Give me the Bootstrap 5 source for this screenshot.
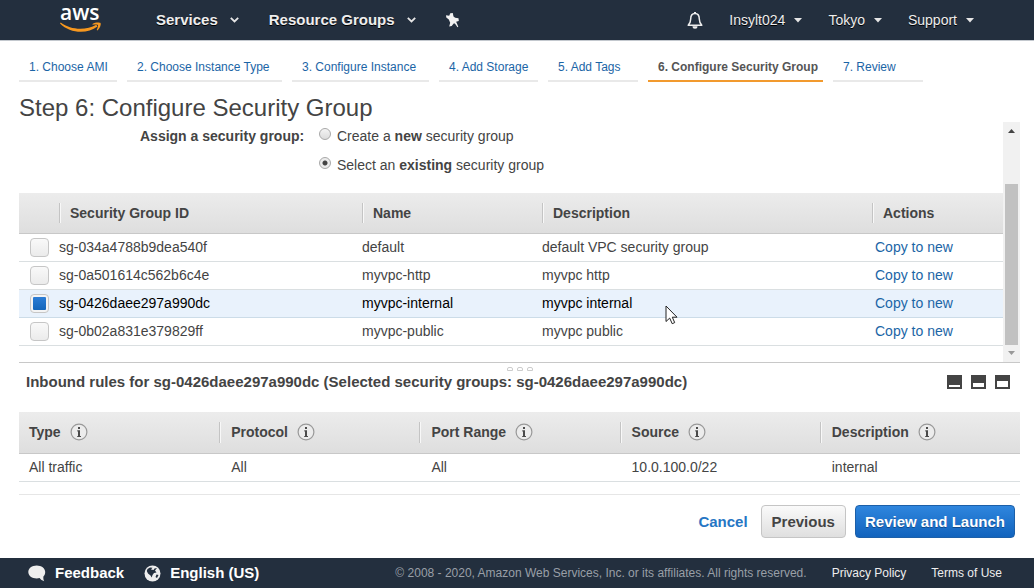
<!DOCTYPE html>
<html lang="en">
<head>
<meta charset="utf-8">
<meta name="viewport" content="width=device-width, initial-scale=1">
<title>Configure Security Group</title>
<link href="https://cdn.jsdelivr.net/npm/bootstrap@5.3.0/dist/css/bootstrap.min.css" rel="stylesheet">
<style>
  body { font: 14px/20px "Liberation Sans", Arial, sans-serif; color: #444; background: #fff; }
  a { text-decoration: none; color: #1b65a6; }
  button { font-family: inherit; }
  svg { display: block; flex: none; overflow: visible; }

  .console-bar { background: #232f3e; height: 41px; padding: 0 60px 0 58px; border-bottom: 1px solid #c3c8ce; }
  .console-bar button { border: 0; background: none; padding: 0; color: #eee; text-shadow: 0 1px 0 #000; line-height: 20px; }
  .menu-main { font-size: 15px; font-weight: 700; gap: 12px; }
  .menu-side { font-size: 14px; gap: 9px; }
  .main-group { gap: 30px; margin-left: 53px; }
  .side-group { gap: 26px; }

  .wizard { padding: 9px 14px 0 19px; }
  .steps { display: grid; grid-template-columns: 98px 155px 137px 99px 90px 175px 90px; column-gap: 10px; font-size: 12px; white-space: nowrap; }
  .steps a { display: block; padding: 7px 0 4px 10px; height: 32px; border-bottom: 2px solid #e9e9e9; }
  .steps a.current { color: #555; font-weight: 700; border-color: #f29a2e; }
  .wizard h1 { font-size: 24px; line-height: 30px; margin: 11px 0 -1px; font-weight: 400; color: #444; }

  .pane { border-bottom: 1px solid #c8c8c8; }
  .assign { padding: 4px 0 18px 121px; column-gap: 10px; }
  .assign-label { font-weight: 700; width: 169px; white-space: nowrap; }
  .choices { gap: 9px; }
  .choice { gap: 6px; }
  .choice input { appearance: none; width: 12px; height: 12px; margin: 2px 0 6px; border: 1px solid #a8a8a8; border-radius: 50%; background: linear-gradient(#f4f4f4, #dcdcdc); }
  .choice input:checked { background: radial-gradient(circle, #444 0 2px, #ececec 3px); }

  .grid-table { width: 100%; table-layout: fixed; border-collapse: separate; border-spacing: 0; }
  .grid-table th { height: 41px; padding: 0 0 0 11px; background: linear-gradient(#ececec, #dedede); border-bottom: 1px solid #c8c8c8; font-weight: 700; white-space: nowrap; position: relative; }
  .grid-table th + th::before { content: ""; position: absolute; left: 0; top: 10px; bottom: 10px; width: 2px; background: linear-gradient(90deg, #c4c4c4 50%, #f8f8f8 50%); }
  .grid-table td { height: 28px; padding: 0 0 2px; border-bottom: 1px solid #dadfe1; white-space: nowrap; }
  .grid-table td:has(.pick) { padding-bottom: 0; }
  .grid-table tr.chosen td { background: #e9f2fc; color: #000; border-color: #ccdce8; }
  .grid-table td.act { padding-left: 3px; }
  .c-pick { width: 40px; } .c-id { width: 303px; } .c-name { width: 180px; } .c-act { width: 131px; }
  .pick { appearance: none; display: block; width: 19px; height: 19px; margin: 0 0 0 11px; border: 1px solid #c6c6c6; border-radius: 4px; background: linear-gradient(#f9f9f9, #ebebeb); padding: 2px; }
  .pick:checked { background: linear-gradient(#2c7dd6, #1566ba) content-box, #f4f4f4; }

  .scroller { width: 17px; background: #f1f1f1; }
  .scroller .grip-bar { width: 13px; height: 161px; background: #c1c1c1; margin: 0 auto; }

  .grips { height: 9px; gap: 4px; padding-top: 4px; }
  .grips i { width: 6px; height: 4px; border: 1px solid #ccc; border-radius: 2px 2px 0 0; }
  .rules-title { padding: 0 10px 0 7px; margin-bottom: 20px; }
  .rules-title h2 { font-size: 15px; line-height: 20px; font-weight: 700; margin: 0; }
  .rules-title button { border: 0; padding: 0; background: none; }
  .size-buttons, .head-info { gap: 9px; }
  .rules th { height: 42px; padding: 0 0 1px 12px; }
  .rules td { padding-left: 12px; }
  .rules th:first-child, .rules td:first-child { padding-left: 10px; }
  .actions { margin-top: 12px; border-top: 1px solid #e6e6e6; padding: 10px 5px 20px; }
  .actions .btn { font-size: 15px; line-height: 20px; font-weight: 700; height: 33px; padding: 5px 10px; border-radius: 4px; }
  .actions .btn-link { color: #2676c4; text-decoration: none; padding: 5px 12px; }
  .actions .btn-plain { color: #444; border: 1px solid #c5c5c5; background: linear-gradient(#fafafa, #dfdfdf); margin-right: 9px; }
  .actions .btn-go { color: #fff; border: 1px solid #1c5fa8; background: linear-gradient(#2f86de, #1163bd); text-shadow: 0 1px 0 #104a8c; padding: 5px 9px; }

  .foot { background: #232f3e; min-height: 30px; padding: 0 32px 0 28px; font-size: 12px; color: #999fa7; white-space: nowrap; }
  .foot a { color: #eee; }
  .foot-left { gap: 20px; }
  .foot-right { gap: 25px; }
  .foot .strong-link { font-size: 15px; font-weight: 700; color: #fff; gap: 9px; }
  .pointer { position: absolute; left: 123px; top: 15px; z-index: 2; }
</style>
</head>
<body class="d-flex flex-column min-vh-100">

<svg width="0" height="0" class="position-absolute" aria-hidden="true">
  <symbol id="info" viewBox="0 0 18 18"><circle cx="9" cy="9" r="7.900" fill="#ececec" stroke="#999" stroke-width="1.200"/><path d="M8 4h2v2H8zM7.300 7.300H10V13h1v1H7.200v-1H8V8.400h-.7z" fill="#4a4a4a"/></symbol>
  <symbol id="chev" viewBox="0 0 9 6"><path d="M.8.9 4.500 4.500 8.200.9" fill="none" stroke="#e6e6e6" stroke-width="1.800"/></symbol>
  <symbol id="tri" viewBox="0 0 8 5"><path d="M0 0h8L4 4.600z" fill="#e6e6e6"/></symbol>
</svg>

<nav class="console-bar d-flex align-items-center" aria-label="Console">
  <a href="#" aria-label="AWS home">
    <svg width="45" height="40" viewBox="0 -5 45 40">
      <text x="2" y="15" font-family="Open Sans, sans-serif" font-size="21" font-weight="600" fill="#fff">aws</text>
      <path d="M2 18.500C12 28.500 29 29.500 39.500 21.500l-1.200-1.700C28.500 25.500 13 25.500 2.700 17.600z" fill="#f7981f"/>
      <path d="M34.500 18.900c2.500-1.500 7-1.700 8-.8.8 1.200-.5 5.500-3 7.300l-.8-.5c1-2 1.700-4.300 1.200-4.900-.7-.6-3.200-.5-5.300-.2z" fill="#f7981f"/>
    </svg>
  </a>
  <div class="main-group d-flex align-items-center">
    <button class="menu-main d-flex align-items-center">Services <svg width="9" height="6"><use href="#chev"/></svg></button>
    <button class="menu-main d-flex align-items-center">Resource Groups <svg width="9" height="6"><use href="#chev"/></svg></button>
    <button aria-label="Pin shortcuts"><svg width="13" height="15" viewBox="0 0 13 15"><path d="M4.300.3 6.800 0l.7 3.500 1.700 1.200 3.300.6.300 2.700-2.700.700.600 1.200 1.600 3.900-.8.400-2.600-3.700-1.200-.1-2 2.700-2.500.300 1-3.700-1.400-3.200L.3 4.500 0 2.300l3.200.4z" fill="#f2f2f2"/></svg></button>
  </div>
  <div class="side-group d-flex align-items-center ms-auto">
    <button aria-label="Notifications"><svg width="16" height="17" viewBox="0 0 16 17"><path d="M8 1.500C4.500 1.500 3.700 4 3.700 7c0 3-.7 4.300-2.500 6.200h13.600C13 11.300 12.300 10 12.300 7c0-3-.8-5.500-4.300-5.500z" fill="none" stroke="#eee" stroke-width="1.500" stroke-linejoin="round"/><path d="M7 0h2v2H7zM5.500 14.200h5a2.500 2.500 0 0 1-5 0z" fill="#eee"/></svg></button>
    <button class="menu-side d-flex align-items-center">Insylt024 <svg width="8" height="5"><use href="#tri"/></svg></button>
    <button class="menu-side d-flex align-items-center">Tokyo <svg width="8" height="5"><use href="#tri"/></svg></button>
    <button class="menu-side d-flex align-items-center">Support <svg width="8" height="5"><use href="#tri"/></svg></button>
  </div>
</nav>

<main class="wizard flex-grow-1">
  <nav class="steps" aria-label="Steps">
    <a href="#">1. Choose AMI</a>
    <a href="#">2. Choose Instance Type</a>
    <a href="#">3. Configure Instance</a>
    <a href="#">4. Add Storage</a>
    <a href="#">5. Add Tags</a>
    <a href="#" class="current" aria-current="step">6. Configure Security Group</a>
    <a href="#">7. Review</a>
  </nav>
  <h1>Step 6: Configure Security Group</h1>

  <section class="pane d-flex">
    <div class="flex-grow-1">
      <div class="assign d-flex" role="radiogroup" aria-labelledby="assign">
        <div class="assign-label" id="assign">Assign a security group:</div>
        <div class="choices d-flex flex-column">
          <div class="choice d-flex"><input type="radio" name="sg" id="sg-new"><label for="sg-new">Create a <b>new</b> security group</label></div>
          <div class="choice d-flex"><input type="radio" name="sg" id="sg-old" checked><label for="sg-old">Select an <b>existing</b> security group</label></div>
        </div>
      </div>
      <table class="grid-table">
        <colgroup><col class="c-pick"><col class="c-id"><col class="c-name"><col><col class="c-act"></colgroup>
        <thead><tr><th></th><th>Security Group ID</th><th>Name</th><th>Description</th><th>Actions</th></tr></thead>
        <tbody>
          <tr><td><input class="pick" type="checkbox" id="g1"></td><td><label for="g1">sg-034a4788b9dea540f</label></td><td>default</td><td>default VPC security group</td><td class="act"><a href="#">Copy to new</a></td></tr>
          <tr><td><input class="pick" type="checkbox" id="g2"></td><td><label for="g2">sg-0a501614c562b6c4e</label></td><td>myvpc-http</td><td>myvpc http</td><td class="act"><a href="#">Copy to new</a></td></tr>
          <tr class="chosen"><td><input class="pick" type="checkbox" id="g3" checked></td><td><label for="g3">sg-0426daee297a990dc</label></td><td>myvpc-internal</td><td class="position-relative">myvpc internal
            <svg class="pointer" width="13" height="20" viewBox="0 0 13 20"><path d="M1 1v15.500l3.700-3.400 2.500 5.600 2.500-1.100-2.400-5.400H12z" fill="#fff" stroke="#222" stroke-width="1"/></svg></td><td class="act"><a href="#">Copy to new</a></td></tr>
          <tr><td><input class="pick" type="checkbox" id="g4"></td><td><label for="g4">sg-0b02a831e379829ff</label></td><td>myvpc-public</td><td>myvpc public</td><td class="act"><a href="#">Copy to new</a></td></tr>
        </tbody>
      </table>
      <div class="pt-3"></div>
    </div>
    <div class="scroller flex-shrink-0 d-flex flex-column align-items-center" aria-hidden="true">
      <svg width="7" height="18" viewBox="0 0 7 18"><path d="M0 11h7L3.500 7z" fill="#444"/></svg>
      <div class="grip-bar mt-auto"></div>
      <svg width="7" height="17" viewBox="0 0 7 17"><path d="M0 6h7L3.500 10z" fill="#999"/></svg>
    </div>
  </section>

  <section>
    <div class="grips d-flex justify-content-center" aria-hidden="true"><i></i><i></i><i></i></div>
    <div class="rules-title d-flex align-items-center justify-content-between">
      <h2>Inbound rules for sg-0426daee297a990dc (Selected security groups: sg-0426daee297a990dc)</h2>
      <div class="size-buttons d-flex">
        <button aria-label="Small panel"><svg width="15" height="14"><path d="M0 0h15v14H0z" fill="#444"/><path d="M2 10h11v2H2z" fill="#fff"/></svg></button>
        <button aria-label="Half panel"><svg width="15" height="14"><path d="M0 0h15v14H0z" fill="#444"/><path d="M2 8h11v4H2z" fill="#fff"/></svg></button>
        <button aria-label="Full panel"><svg width="15" height="14"><path d="M0 0h15v14H0z" fill="#444"/><path d="M2 6h11v6H2z" fill="#fff"/></svg></button>
      </div>
    </div>
    <table class="grid-table rules">
      <thead><tr>
        <th><span class="head-info d-flex align-items-center">Type <svg width="18" height="18"><use href="#info"/></svg></span></th>
        <th><span class="head-info d-flex align-items-center">Protocol <svg width="18" height="18"><use href="#info"/></svg></span></th>
        <th><span class="head-info d-flex align-items-center">Port Range <svg width="18" height="18"><use href="#info"/></svg></span></th>
        <th><span class="head-info d-flex align-items-center">Source <svg width="18" height="18"><use href="#info"/></svg></span></th>
        <th><span class="head-info d-flex align-items-center">Description <svg width="18" height="18"><use href="#info"/></svg></span></th>
      </tr></thead>
      <tbody><tr><td>All traffic</td><td>All</td><td>All</td><td>10.0.100.0/22</td><td>internal</td></tr></tbody>
    </table>
  </section>

  <div class="actions d-flex justify-content-end">
    <button class="btn btn-link">Cancel</button>
    <button class="btn btn-plain">Previous</button>
    <button class="btn btn-go">Review and Launch</button>
  </div>
</main>

<footer class="foot d-flex align-items-center justify-content-between">
  <div class="foot-left d-flex">
    <a href="#" class="strong-link d-flex align-items-center"><svg width="18" height="17" viewBox="0 0 18 17"><path d="M8.700.500C4 .500.300 3.300.300 7s3.700 6.500 8.400 6.500c1 0 2-.1 2.900-.4 1 1.400 2.400 2.600 4.600 3.100-.8-1.300-1-2.900-.8-4.800C16.700 10.300 17.200 8.700 17.200 7 17.200 3.300 13.400.500 8.700.500z" fill="#eee"/></svg>Feedback</a>
    <a href="#" class="strong-link d-flex align-items-center"><svg width="17" height="17" viewBox="0 0 17 17"><circle cx="8.500" cy="8.500" r="8" fill="#eee"/><path d="M3.500 4 6 2.500l2.500.3L7 4.500l2.500.5 1-1.500 2.500-.5-2 2.500 1.500 2-2.500.5L8.500 10l-.8 2.500-1.200-2L4 8.500 2.800 6zM12.500 9.500l2 .5-1.500 3-1.500-1z" fill="#232f3e"/></svg>English (US)</a>
  </div>
  <div class="foot-right d-flex">
    <span>© 2008 - 2020, Amazon Web Services, Inc. or its affiliates. All rights reserved.</span>
    <a href="#">Privacy Policy</a>
    <a href="#">Terms of Use</a>
  </div>
</footer>
<script src="https://cdn.jsdelivr.net/npm/bootstrap@5.3.0/dist/js/bootstrap.bundle.min.js"></script>
</body>
</html>
